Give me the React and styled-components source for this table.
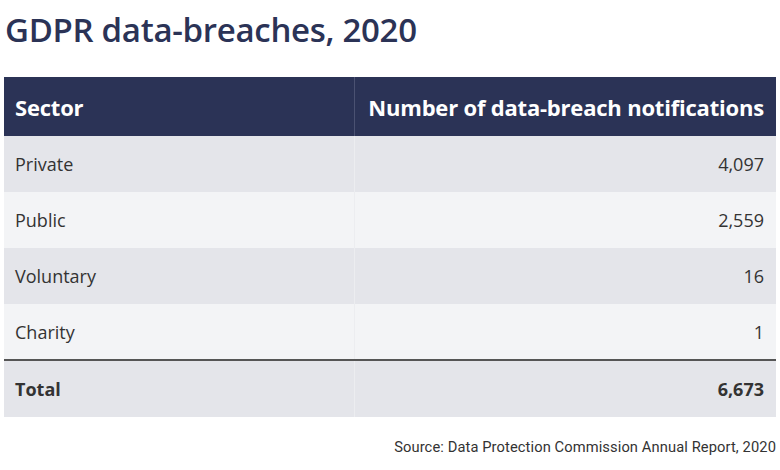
import React from "react";
import styled, { createGlobalStyle } from "styled-components";

const Global = createGlobalStyle`
  html, body { margin: 0; padding: 0; background: #ffffff; }
  body { font-family: "Open Sans", "Noto Sans", sans-serif; }
`;

const Page = styled.div`
  width: 780px;
  height: 470px;
  box-sizing: border-box;
  padding: 8px 4px 0 4px;
  display: flex;
  flex-direction: column;
`;

const Title = styled.h1`
  margin: 0 0 0 1px;
  font-family: "Open Sans", sans-serif;
  font-weight: 600;
  font-size: 33px;
  line-height: 44px;
  color: #2b3356;
  letter-spacing: -0.3px;
`;

const Table = styled.table`
  margin-top: 25px;
  width: 772px;
  table-layout: fixed;
  border-collapse: collapse;
  font-family: "Open Sans", sans-serif;
`;

const Col = styled.col`
  width: ${(p) => p.$w};
`;

const HeadCell = styled.th`
  background: #2b3356;
  color: #ffffff;
  font-weight: 700;
  font-size: 22px;
  height: 59px;
  padding: 0 12px 0 11px;
  white-space: nowrap;
  text-align: ${(p) => (p.$right ? "right" : "left")};
  border-left: ${(p) => (p.$right ? "1px solid #4b5272" : "none")};
  box-sizing: border-box;
  letter-spacing: -0.2px;
`;

const Row = styled.tr`
  background: ${(p) => (p.$alt ? "#f3f4f6" : "#e4e5ea")};
  border-top: ${(p) => (p.$total ? "2px solid #555555" : "none")};
`;

const Cell = styled.td`
  height: ${(p) => (p.$total ? "57px" : "56px")};
  padding: 0 12px 0 11px;
  font-size: 18px;
  color: #333333;
  white-space: nowrap;
  font-weight: ${(p) => (p.$total ? 700 : 400)};
  text-align: ${(p) => (p.$right ? "right" : "left")};
  border-left: ${(p) => (p.$right ? "1px solid #ecedf0" : "none")};
  box-sizing: border-box;
`;

const Source = styled.div`
  margin-top: 21px;
  text-align: right;
  font-family: "Roboto", "Liberation Sans", sans-serif;
  font-size: 14.7px;
  color: #333333;
  letter-spacing: 0.1px;
`;

const rows = [
  ["Private", "4,097"],
  ["Public", "2,559"],
  ["Voluntary", "16"],
  ["Charity", "1"],
];

export default function App() {
  return (
    <Page>
      <Global />
      <Title>GDPR data-breaches, 2020</Title>
      <Table>
        <colgroup>
          <Col $w="350px" />
          <Col $w="422px" />
        </colgroup>
        <thead>
          <tr>
            <HeadCell>Sector</HeadCell>
            <HeadCell $right>Number of data-breach notifications</HeadCell>
          </tr>
        </thead>
        <tbody>
          {rows.map(([s, n], i) => (
            <Row key={s} $alt={i % 2 === 1}>
              <Cell>{s}</Cell>
              <Cell $right>{n}</Cell>
            </Row>
          ))}
          <Row $total>
            <Cell $total>Total</Cell>
            <Cell $total $right>6,673</Cell>
          </Row>
        </tbody>
      </Table>
      <Source>Source: Data Protection Commission Annual Report, 2020</Source>
    </Page>
  );
}
